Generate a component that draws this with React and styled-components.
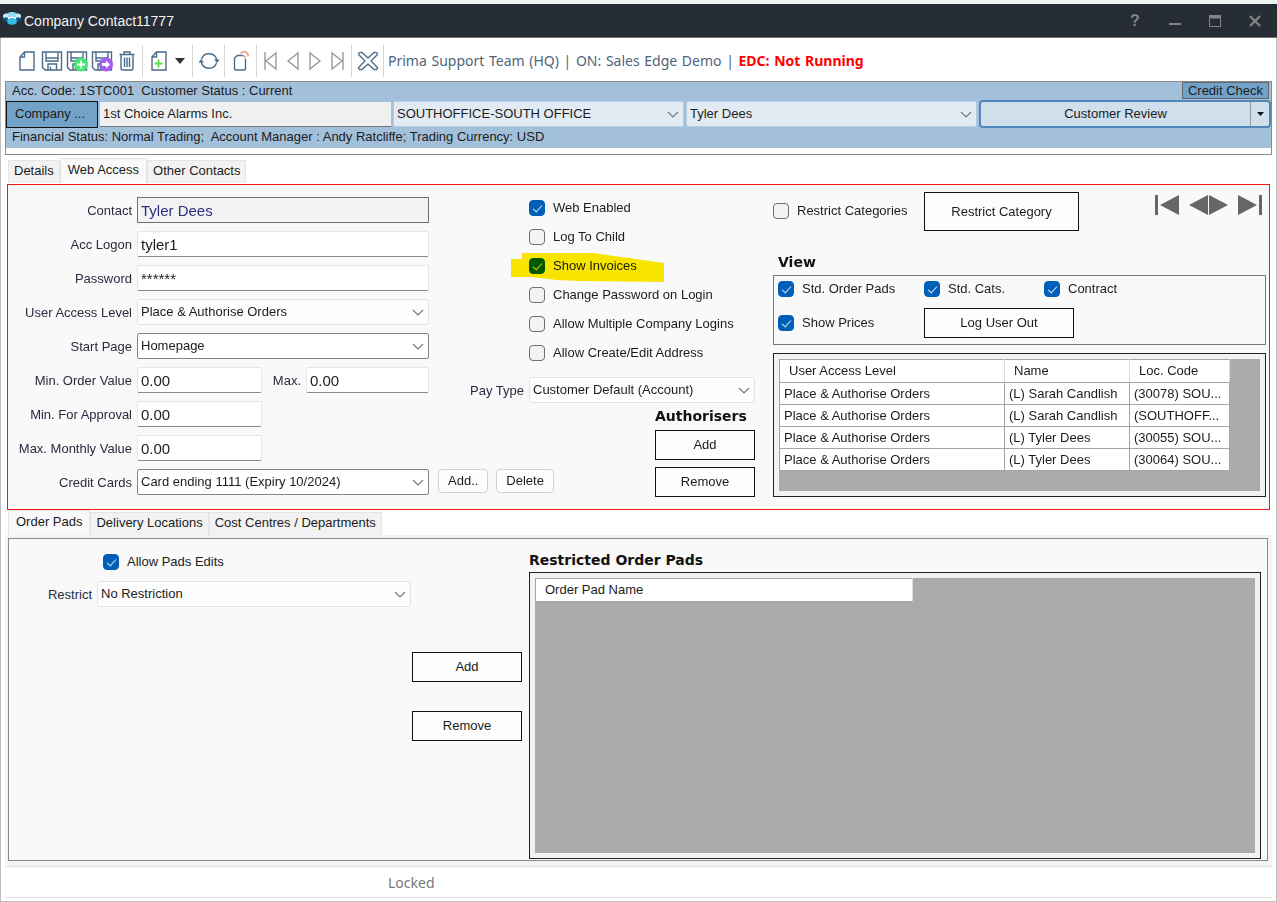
import React from 'react';
import styled, { createGlobalStyle, css } from 'styled-components';

export default function App() {
  return (
    <Window>
      <GlobalStyle />
      <TitleBar>
        <AppIcon />
        <Title>Company Contact11777</Title>
        <WindowButton aria-label="Help"><b>?</b></WindowButton>
        <WindowButton aria-label="Minimize">
          <svg width="14" height="14"><path d="M1 10h12" stroke="currentColor" strokeWidth="2" /></svg>
        </WindowButton>
        <WindowButton aria-label="Maximize">
          <svg width="14" height="14" fill="none" stroke="currentColor">
            <rect x="1.5" y="1.5" width="11" height="11" />
            <path d="M1 3h12" strokeWidth="3" />
          </svg>
        </WindowButton>
        <WindowButton aria-label="Close">
          <svg width="14" height="14"><path d="M2 2l10 10M12 2L2 12" stroke="currentColor" strokeWidth="2.4" /></svg>
        </WindowButton>
      </TitleBar>
      <Body>
        <MainToolbar />
        <CompanyHeader />
        <Tabs aria-label="Contact">
          <Tab>Details</Tab>
          <Tab $active>Web Access</Tab>
          <Tab>Other Contacts</Tab>
        </Tabs>
        <WebAccess>
          <LoginForm />
          <AccessOptions />
          <ViewOptions />
        </WebAccess>
        <Tabs aria-label="Restrictions">
          <Tab $active>Order Pads</Tab>
          <Tab>Delivery Locations</Tab>
          <Tab>Cost Centres / Departments</Tab>
        </Tabs>
        <OrderPads />
        <StatusBar>Locked</StatusBar>
      </Body>
    </Window>
  );
}

function AppIcon() {
  return (
    <svg width="20" height="19" viewBox="0 0 20 19">
      <ellipse cx="10" cy="6" rx="9" ry="5" fill="#2b83ba" />
      <ellipse cx="4" cy="5" rx="3" ry="2.5" fill="#cdeaf6" />
      <ellipse cx="10" cy="3.5" rx="4" ry="2.5" fill="#8fdcec" />
      <ellipse cx="16" cy="5" rx="3" ry="2.5" fill="#cdeaf6" />
      <ellipse cx="4" cy="8" rx="2.6" ry="1.8" fill="#14599a" />
      <ellipse cx="16" cy="8" rx="2.6" ry="1.8" fill="#14599a" />
      <ellipse cx="10" cy="10.5" rx="4.8" ry="3.2" fill="#2fbfe6" />
      <path d="M6 7.5q4-2.500 8 0" fill="none" stroke="#fff" strokeWidth="1.500" />
    </svg>
  );
}

function MainToolbar() {
  return (
    <Toolbar>
      <ToolButton aria-label="New"><Icon><Page /></Icon></ToolButton>
      <ToolButton aria-label="Save"><Icon><Disk /></Icon></ToolButton>
      <ToolButton aria-label="Save and new">
        <Icon>
          <Disk />
          <circle cx="15" cy="14.500" r="7" fill="#48e873" stroke="none" />
          <path d="M15 10.500v8M11 14.500h8" stroke="#fff" strokeWidth="1.800" />
        </Icon>
      </ToolButton>
      <ToolButton aria-label="Save and close">
        <Icon>
          <Disk />
          <circle cx="15" cy="14.500" r="7" fill="#a65cf0" stroke="none" />
          <path d="M11 13h4v-2.500l4 4-4 4V16h-4z" fill="#fff" stroke="none" />
        </Icon>
      </ToolButton>
      <ToolButton aria-label="Delete">
        <Icon>
          <path d="M3.500 4.500h15M8 4V2h6v2M5 5v13.500q0 1.500 1.500 1.500h9q1.500 0 1.500-1.500V5M8.500 7.500v9.500M11 7.500v9.500M13.500 7.500v9.500" />
        </Icon>
      </ToolButton>
      <Separator />
      <ToolButton aria-label="Add">
        <Icon>
          <Page />
          <path d="M10.500 9.500v8M6.500 13.500h8" stroke="#5fe04f" strokeWidth="2" />
        </Icon>
      </ToolButton>
      <ToolButton aria-label="Add options" $width={18}>
        <svg width="10" height="6"><path d="M0 0h10L5 6z" fill="#333" /></svg>
      </ToolButton>
      <Separator />
      <ToolButton aria-label="Refresh">
        <Icon>
          <path d="M3.500 9a8 8 0 0 1 15.300 1M18.500 13a8 8 0 0 1-15.300-1" />
          <path d="M16 9.500h5.500l-2.500 3.500zM6 12.500H.5L3 9z" fill="#4b6b88" stroke="none" />
        </Icon>
      </ToolButton>
      <Separator />
      <ToolButton aria-label="Copy">
        <Icon>
          <path d="M13 5.500H7.500L4.500 8v10.500q0 1.500 1.500 1.500h8q1.500 0 1.500-1.500V9" />
          <path d="M10.500 3.500Q13 1 16 2.200q2.500 1.300 2.200 4.300M12.500 5.500q2.500 0 3 3" stroke="#d99b7c" />
        </Icon>
      </ToolButton>
      <Separator />
      <ToolButton aria-label="First record" $width={22}><Icon $muted><path d="M5 2v18M16 3v16L6 11z" /></Icon></ToolButton>
      <ToolButton aria-label="Previous record" $width={22}><Icon $muted><path d="M16 3v16L6 11z" /></Icon></ToolButton>
      <ToolButton aria-label="Next record" $width={22}><Icon $muted><path d="M6 3v16l10-8z" /></Icon></ToolButton>
      <ToolButton aria-label="Last record" $width={22}><Icon $muted><path d="M17 2v18M6 3v16l10-8z" /></Icon></ToolButton>
      <Separator />
      <ToolButton aria-label="Close record">
        <Icon>
          <path d="M2 5Q1 4 2 3t3-.5L11 8l6-5.500Q19 2 20 3t0 2l-6 6 6 6q1 1 0 2t-3 .5L11 14l-6 5.500Q3 20 2 19t0-2l6-6z" strokeLinejoin="round" />
        </Icon>
      </ToolButton>
      <Separator />
      <ToolbarText>
        Prima Support Team (HQ) | ON: Sales Edge Demo | <strong>EDC: Not Running</strong>
      </ToolbarText>
    </Toolbar>
  );
}

function Page() {
  return <path d="M8.500 2H18v18H4V7zM8.500 2v5H4" />;
}

function Disk() {
  return <path d="M1.500 2h19v18H4l-2.500-2.500zM5 2v9h12V2M5 8h12M7 20v-6h8.500v6M9.500 16.500V20" />;
}

function CompanyHeader() {
  return (
    <Header>
      <HeaderLine>
        <span>Acc. Code: 1STC001&nbsp; Customer Status : Current</span>
        <CreditButton>Credit Check</CreditButton>
      </HeaderLine>
      <HeaderRow>
        <CompanyButton>Company ...</CompanyButton>
        <CompanyInput aria-label="Company" defaultValue="1st Choice Alarms Inc." />
        <Combo label="Location" value="SOUTHOFFICE-SOUTH OFFICE" tone="blue" />
        <Combo label="Company contact" value="Tyler Dees" tone="blue" />
        <SplitButton>
          <ReviewButton>Customer Review</ReviewButton>
          <ReviewMenu aria-label="Customer review options">
            <svg width="7" height="4"><path d="M0 0h7L3.500 4z" fill="#111" /></svg>
          </ReviewMenu>
        </SplitButton>
      </HeaderRow>
      <HeaderLine>
        <span>Financial Status: Normal Trading;&nbsp; Account Manager : Andy Ratcliffe; Trading Currency: USD</span>
      </HeaderLine>
    </Header>
  );
}

function Combo({ id, label, value, tone }) {
  return (
    <ComboBox>
      <Select id={id} aria-label={label} $tone={tone} defaultValue={value}>
        <option>{value}</option>
      </Select>
      <Chevron width="12" height="7" viewBox="0 0 12 7">
        <path d="M1 1l5 5 5-5" fill="none" stroke="#777" strokeWidth="1.200" />
      </Chevron>
    </ComboBox>
  );
}

function Check({ label, checked, children }) {
  return (
    <CheckLabel>
      <CheckBox type="checkbox" defaultChecked={checked} />
      {label}
      {children}
    </CheckLabel>
  );
}

function LoginForm() {
  return (
    <FormGrid>
      <Label htmlFor="contact">Contact</Label>
      <Input id="contact" defaultValue="Tyler Dees" readOnly $boxed />
      <Label htmlFor="logon">Acc Logon</Label>
      <Input id="logon" defaultValue="tyler1" />
      <Label htmlFor="password">Password</Label>
      <Input id="password" defaultValue="******" />
      <Label htmlFor="level">User Access Level</Label>
      <Combo id="level" value="Place & Authorise Orders" />
      <Label htmlFor="start">Start Page</Label>
      <Combo id="start" value="Homepage" tone="boxed" />
      <Label htmlFor="min">Min. Order Value</Label>
      <ValueRow>
        <Input id="min" defaultValue="0.00" />
        <Label htmlFor="max">Max.</Label>
        <Input id="max" defaultValue="0.00" />
      </ValueRow>
      <Label htmlFor="approval">Min. For Approval</Label>
      <ValueRow><Input id="approval" defaultValue="0.00" /></ValueRow>
      <Label htmlFor="monthly">Max. Monthly Value</Label>
      <ValueRow><Input id="monthly" defaultValue="0.00" /></ValueRow>
      <Label htmlFor="cards">Credit Cards</Label>
      <Combo id="cards" value="Card ending 1111 (Expiry 10/2024)" tone="boxed" />
    </FormGrid>
  );
}

function AccessOptions() {
  return (
    <MiddleColumn>
      <CheckList>
        <Check label="Web Enabled" checked />
        <Check label="Log To Child" />
        <Check label="Show Invoices" checked>
          <Highlight width="153" height="29" viewBox="0 0 153 29">
            <path d="M0 6h11V0h71l71 10v19l-84-1-23-1-27-3H0z" fill="#fdeb00" />
          </Highlight>
        </Check>
        <Check label="Change Password on Login" />
        <Check label="Allow Multiple Company Logins" />
        <Check label="Allow Create/Edit Address" />
      </CheckList>
      <PayRow>
        <Label htmlFor="pay">Pay Type</Label>
        <Combo id="pay" value="Customer Default (Account)" />
      </PayRow>
      <ActionRow>
        <CardButtons>
          <SoftButton>Add..</SoftButton>
          <SoftButton>Delete</SoftButton>
        </CardButtons>
        <Authorisers>
          <Heading>Authorisers</Heading>
          <OutlineButton>Add</OutlineButton>
          <OutlineButton>Remove</OutlineButton>
        </Authorisers>
      </ActionRow>
    </MiddleColumn>
  );
}

function ViewOptions() {
  return (
    <RightColumn>
      <CategoryRow>
        <Check label="Restrict Categories" />
        <OutlineButton>Restrict Category</OutlineButton>
        <RecordNav>
          <NavButton aria-label="First contact">
            <svg width="26" height="22"><path d="M1 1h3v20H1zM25 1v20L6 11z" fill="#666" /></svg>
          </NavButton>
          <NavPair>
            <NavButton aria-label="Previous contact">
              <svg width="19" height="22"><path d="M19 1v20L0 11z" fill="#666" /></svg>
            </NavButton>
            <NavButton aria-label="Next contact">
              <svg width="19" height="22"><path d="M0 1v20l19-10z" fill="#666" /></svg>
            </NavButton>
          </NavPair>
          <NavButton aria-label="Last contact">
            <svg width="26" height="22"><path d="M22 1h3v20h-3zM1 1v20l19-10z" fill="#666" /></svg>
          </NavButton>
        </RecordNav>
      </CategoryRow>
      <ViewHeading>View</ViewHeading>
      <ViewBox>
        <Check label="Std. Order Pads" checked />
        <Check label="Std. Cats." checked />
        <Check label="Contract" checked />
        <Check label="Show Prices" checked />
        <LogOutButton>Log User Out</LogOutButton>
      </ViewBox>
      <GridFrame>
        <GridArea>
          <Table>
            <colgroup>
              <col width="225" />
              <col width="125" />
              <col width="100" />
            </colgroup>
            <thead>
              <tr><th>User Access Level</th><th>Name</th><th>Loc. Code</th></tr>
            </thead>
            <tbody>
              {users.map(user => (
                <tr key={user.code}>
                  <td>Place &amp; Authorise Orders</td>
                  <td>{user.name}</td>
                  <td>{user.code}</td>
                </tr>
              ))}
            </tbody>
          </Table>
        </GridArea>
      </GridFrame>
    </RightColumn>
  );
}

function OrderPads() {
  return (
    <PadsFrame>
      <PadsPanel>
        <PadsLeft>
          <PadsCheck>
            <Check label="Allow Pads Edits" checked />
          </PadsCheck>
          <RestrictRow>
            <Label htmlFor="restrict">Restrict</Label>
            <Combo id="restrict" value="No Restriction" />
          </RestrictRow>
          <PadsButtons>
            <OutlineButton>Add</OutlineButton>
            <OutlineButton>Remove</OutlineButton>
          </PadsButtons>
        </PadsLeft>
        <PadsRight>
          <PadsHeading>Restricted Order Pads</PadsHeading>
          <GridFrame>
            <GridArea>
              <Table>
                <colgroup><col width="377" /></colgroup>
                <thead><tr><th>Order Pad Name</th></tr></thead>
              </Table>
            </GridArea>
          </GridFrame>
        </PadsRight>
      </PadsPanel>
    </PadsFrame>
  );
}

const users = [
  { name: '(L) Sarah Candlish', code: '(30078) SOU...' },
  { name: '(L) Sarah Candlish', code: '(SOUTHOFF...' },
  { name: '(L) Tyler Dees', code: '(30055) SOU...' },
  { name: '(L) Tyler Dees', code: '(30064) SOU...' }
];

const GlobalStyle = createGlobalStyle`
  * { box-sizing: border-box; }
  body {
    margin: 0;
    background: #eef3f3;
    font: 13px/16px 'Liberation Sans', Arial, sans-serif;
    color: #1c1c1c;
  }
  button, input, select {
    font: inherit;
    color: inherit;
    margin: 0;
  }
  svg { display: block; flex: none; }
`;
const Window = styled.div`
  display: flex;
  flex-direction: column;
  min-height: 100vh;
  padding-top: 4px;
`;
const TitleBar = styled.header`
  display: flex;
  align-items: center;
  height: 34px;
  padding: 0 2px;
  background: #262d35;
  border-bottom: 1px solid #6b6f74;
  color: #f2f2f2;
`;
const Title = styled.h1`
  flex: 1;
  margin: 0 2px;
  font-size: 14px;
  font-weight: normal;
`;
const WindowButton = styled.button`
  display: flex;
  align-items: center;
  justify-content: center;
  width: 40px;
  height: 32px;
  padding: 0;
  border: 0;
  background: none;
  color: #858585;
  font-size: 16px;
`;
const Body = styled.main`
  display: flex;
  flex: 1;
  flex-direction: column;
  padding: 0 4px 3px;
  border: 1px solid #bdbdbd;
  border-top: 0;
  background: #fff;
`;
const Toolbar = styled.div`
  display: flex;
  align-items: center;
  height: 43px;
  padding: 2px 9px 0;
`;
const ToolButton = styled.button`
  display: flex;
  align-items: center;
  justify-content: center;
  width: ${props => props.$width || 25}px;
  height: 26px;
  padding: 0;
  border: 0;
  background: none;
`;
const Icon = styled.svg.attrs({ width: 22, height: 22, viewBox: '0 0 22 22' })`
  fill: none;
  stroke: ${props => (props.$muted ? '#9a9a9a' : '#4b6b88')};
  stroke-width: 1.4;
`;
const Separator = styled.span`
  width: 1px;
  height: 32px;
  margin: 0 3px;
  background: #d5d5d5;
`;
const ToolbarText = styled.span`
  margin-left: 1px;
  font: 14px/20px 'Noto Sans', sans-serif;
  word-spacing: 1px;
  color: #4f6478;

  strong { color: #f00; }
`;
const Header = styled.section`
  margin-bottom: 3px;
  padding-bottom: 8px;
  border: 1px solid #8a8a8a;
  background: linear-gradient(#a3c0db, #a3c0db) no-repeat 0 0 / 100% 66px;
`;
const HeaderLine = styled.div`
  display: flex;
  justify-content: space-between;
  height: 18px;
  padding: 0 2px 0 6px;
  line-height: 18px;
`;
const CreditButton = styled.button`
  width: 87px;
  height: 17px;
  padding: 0;
  border: 1px solid #666;
  background: #73a2c8;
  line-height: 14px;
`;
const HeaderRow = styled.div`
  display: grid;
  grid-template-columns: 92px 291px 1fr 1fr 292px;
  gap: 2px;
  align-items: center;
  height: 28px;
`;
const CompanyButton = styled.button`
  height: 27px;
  padding: 0 8px;
  border: 1px solid #111;
  background: #73a2c8;
  text-align: left;
`;
const CompanyInput = styled.input`
  height: 25px;
  min-width: 0;
  padding: 0 3px;
  border: 0;
  border-bottom: 1px solid #777;
  background: #f0f0f0;
`;
const SplitButton = styled.div`
  display: flex;
  height: 28px;
  border: 2px solid #4f88b8;
  border-radius: 4px;
  background: #cfdfec;
`;
const ReviewButton = styled.button`
  flex: 1;
  border: 0;
  border-right: 1px solid #999;
  background: none;
`;
const ReviewMenu = styled.button`
  display: flex;
  align-items: center;
  justify-content: center;
  width: 18px;
  padding: 0;
  border: 0;
  background: none;
`;
const Tabs = styled.nav`
  display: flex;
  align-items: flex-end;
  height: 25px;
  padding: 0 3px;
`;
const Tab = styled.button`
  height: ${props => (props.$active ? 25 : 23)}px;
  padding: ${props => (props.$active ? '0 7px 2px' : '0 5px 2px')};
  border: 1px solid #e4e4e4;
  border-bottom: 0;
  background: ${props => (props.$active ? '#f9f9f9' : '#f2f2f2')};
`;
const WebAccess = styled.section`
  isolation: isolate;
  display: grid;
  grid-template-columns: 421px 317px 1fr;
  column-gap: 9px;
  margin: 1px 2px 0;
  padding: 0 3px 12px 0;
  border: 1px solid #f01818;
  background: #f9f9f9;
`;
const FormGrid = styled.form`
  display: grid;
  grid-template-columns: 124px 1fr;
  grid-auto-rows: 26px;
  gap: 8px 5px;
  align-content: start;
  padding-top: 12px;
`;
const Label = styled.label`
  line-height: 28px;
  text-align: right;
  white-space: nowrap;
  color: #2b2b40;
`;
const Input = styled.input`
  width: 100%;
  min-width: 0;
  height: 26px;
  padding: 0 3px;
  border: 1px solid #e6e6e6;
  border-bottom-color: #8a8a8a;
  border-radius: 2px;
  background: #fff;
  font-size: 15px;
  ${props => props.$boxed && css`
    border: 1px solid #707070;
    border-radius: 0;
    background: #f3f3f3;
    color: #2f2f80;
  `}
`;
const ValueRow = styled.div`
  display: grid;
  grid-template-columns: 125px 34px 1fr;
  gap: 5px;
`;
const ComboBox = styled.div`
  position: relative;
  min-width: 0;
`;
const tones = {
  plain: { background: '#fdfdfd', border: '#e3e3e3' },
  boxed: { background: '#fff', border: '#858585' },
  blue: { background: '#e2ebf4', border: '#b5cce1' }
};
const Select = styled.select`
  display: block;
  width: 100%;
  height: 26px;
  padding: 0 24px 0 3px;
  border: 1px solid ${props => tones[props.$tone || 'plain'].border};
  border-radius: 2px;
  background: ${props => tones[props.$tone || 'plain'].background};
  appearance: none;
`;
const Chevron = styled.svg`
  position: absolute;
  right: 5px;
  top: 10px;
  pointer-events: none;
`;
const CheckLabel = styled.label`
  position: relative;
  display: flex;
  align-items: center;
  gap: 8px;
  height: 29px;
  white-space: nowrap;
`;
const CheckBox = styled.input`
  flex: none;
  width: 16px;
  height: 16px;
  border: 1px solid #6e6e6e;
  border-radius: 4px;
  background: #f3f3f3;
  appearance: none;

  &:checked {
    border-color: #005fb8;
    background: #005fb8;
  }
  &:checked::after {
    content: '';
    display: block;
    width: 4px;
    height: 8px;
    margin: 2px 5px;
    border: solid #d5e4f2;
    border-width: 0 1px 1px 0;
    transform: rotate(42deg);
  }
`;
const MiddleColumn = styled.div`
  padding-top: 8px;
`;
const CheckList = styled.div`
  padding-left: 91px;
`;
const Highlight = styled.svg`
  position: absolute;
  left: -18px;
  top: 2px;
  mix-blend-mode: multiply;
  pointer-events: none;
`;
const PayRow = styled.div`
  display: grid;
  grid-template-columns: 86px 1fr;
  grid-template-rows: 26px;
  gap: 5px;
  margin-top: 10px;
`;
const ActionRow = styled.div`
  display: flex;
  align-items: flex-end;
  justify-content: space-between;
`;
const CardButtons = styled.div`
  display: flex;
  gap: 8px;
  padding-bottom: 4px;
`;
const SoftButton = styled.button`
  height: 24px;
  padding: 0 9px;
  border: 1px solid #d0d0d0;
  border-radius: 4px;
  background: #fdfdfd;
`;
const Heading = styled.h2`
  margin: 0;
  font: bold 14px/27px 'DejaVu Sans', Verdana, sans-serif;
  color: #111;
`;
const OutlineButton = styled.button`
  min-height: 30px;
  padding: 0;
  border: 1px solid #111;
  background: #fdfdfd;
`;
const Authorisers = styled.div`
  display: flex;
  flex-direction: column;
  width: 100px;

  ${OutlineButton} + ${OutlineButton} { margin-top: 7px; }
`;
const RightColumn = styled.div`
  display: flex;
  flex-direction: column;
  padding: 7px 0 0 9px;
`;
const CategoryRow = styled.div`
  display: grid;
  grid-template-columns: 151px 155px 1fr;
  height: 39px;
  align-items: stretch;

  label { height: 37px; }
`;
const RecordNav = styled.div`
  display: flex;
  justify-content: flex-end;
  align-items: flex-start;
  gap: 9px;
  padding: 2px 3px 0;
`;
const NavPair = styled.div`
  display: flex;
  gap: 1px;
`;
const NavButton = styled.button`
  padding: 0;
  border: 0;
  background: none;
`;
const ViewHeading = styled(Heading)`
  padding: 19px 5px 0;
  line-height: 25px;
`;
const ViewBox = styled.div`
  display: grid;
  grid-template-columns: 146px 120px 1fr;
  grid-template-rows: 25px 43px;
  align-items: center;
  padding: 0 4px;
  border: 1px solid #777;
`;
const LogOutButton = styled(OutlineButton)`
  grid-column: 2 / 4;
  width: 150px;
`;
const GridFrame = styled.div`
  flex: 1;
  display: flex;
  margin-top: 8px;
  padding: 5px;
  border: 1px solid #222;
  background: #f2f2f2;
`;
const GridArea = styled.div`
  flex: 1;
  background: #ababab;
`;
const Table = styled.table`
  width: min-content;
  table-layout: fixed;
  border-collapse: collapse;
  background: #fff;

  th, td {
    height: 22px;
    padding: 0 4px;
    border: 1px solid #a5a5a5;
    text-align: left;
    white-space: nowrap;
    overflow: hidden;
  }
  th {
    height: 23px;
    padding: 0 9px;
    font-weight: normal;
    border-right-color: #dcdcdc;
  }
`;
const PadsFrame = styled.section`
  display: flex;
  flex: 1;
  padding: 3px 4px 5px 3px;
  border-bottom: 1px solid #e2e2e2;
  background: #f3f3f3;
`;
const PadsPanel = styled.div`
  flex: 1;
  display: grid;
  grid-template-columns: 513px 1fr;
  column-gap: 7px;
  padding: 0 6px 1px 0;
  border: 1px solid #8a8a8a;
  background: #f9f9f9;
`;
const PadsLeft = styled.div`
  display: flex;
  flex-direction: column;
  padding-top: 8px;
`;
const PadsCheck = styled.div`
  padding-left: 94px;
`;
const RestrictRow = styled.div`
  display: grid;
  grid-template-columns: 83px 314px;
  grid-template-rows: 26px;
  gap: 5px;
  margin-top: 5px;
`;
const PadsButtons = styled.div`
  display: grid;
  gap: 29px;
  align-self: flex-end;
  width: 110px;
  margin-top: 45px;
`;
const PadsRight = styled.div`
  display: flex;
  flex-direction: column;
  padding-top: 10px;

  ${GridFrame} { margin-top: 0; }
`;
const PadsHeading = styled(Heading)`
  line-height: 23px;
`;
const StatusBar = styled.footer`
  height: 31px;
  padding-left: 383px;
  border-bottom: 1px solid #dedede;
  font: 14px/32px 'Noto Sans', sans-serif;
  color: #777;
`;
